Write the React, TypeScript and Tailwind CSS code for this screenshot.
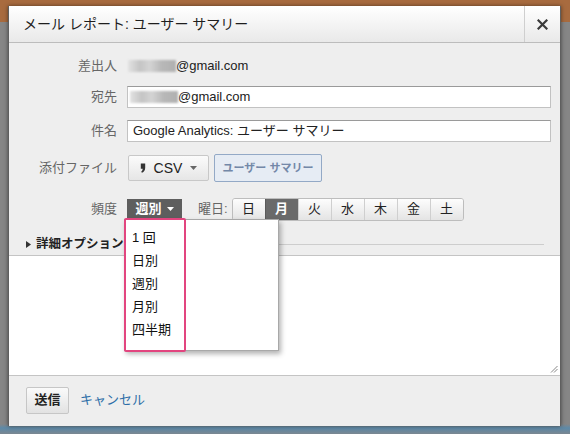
import React from "react";

const font = { fontFamily: '"Liberation Sans", "Noto Sans CJK JP", sans-serif' };

function Caret({ color = "#555" }: { color?: string }) {
  return (
    <svg width="7" height="4" viewBox="0 0 7 4">
      <polygon points="0,0 7,0 3.5,4" fill={color} />
    </svg>
  );
}

function Blur() {
  return (
    <div className="w-[48px] h-[12px] blur-[1.2px] bg-[linear-gradient(to_right,#e2e2e2,#c4c4c4_25%,#d4d4d4_45%,#b8b8b8_70%,#b0b0b0)]" />
  );
}

const days = ["日", "月", "火", "水", "木", "金", "土"];

export default function App() {
  return (
    <div
      className="w-[570px] h-[434px] overflow-hidden pt-[6px] pl-[8px] bg-[linear-gradient(to_bottom,#a86b3f_0px,#a86b3f_22px,#868686_22px,#868686_424px,#5d8aa8_428px,#7b8790_434px)]"
      style={font}
    >
      <div className="relative w-[553px] h-[420px] flex flex-col bg-[#eeeeee] border-l border-r border-[#5f5f5f] shadow-[0_0_4px_rgba(0,0,0,0.5)]">
        {/* header */}
        <div className="h-[37px] flex items-stretch border-b border-[#bcbcbc] bg-[linear-gradient(to_bottom,#ffffff,#e9e9e9)]">
          <div className="flex-1 flex items-center pl-[14px] text-[14px] text-[#1e1e1e]">
            メール レポート: ユーザー サマリー
          </div>
          <div className="w-[36px] border-l border-[#cfcfcf] flex items-center justify-center">
            <svg width="11" height="11" viewBox="0 0 11 11">
              <path d="M1.5 1.5 L9.5 9.5 M9.5 1.5 L1.5 9.5" stroke="#3a3a3a" strokeWidth="2.2" strokeLinecap="square" />
            </svg>
          </div>
        </div>

        {/* body */}
        <div className="flex flex-col pt-[12px] text-[13px]">
          <div className="h-[22px] flex items-center">
            <div className="w-[108px] text-right text-[#666]">差出人</div>
            <div className="ml-[11px] flex items-center text-[#222]">
              <Blur />
              <span>@gmail.com</span>
            </div>
          </div>

          <div className="mt-[9px] h-[22px] flex items-center">
            <div className="w-[108px] text-right text-[#666]">宛先</div>
            <div className="ml-[10px] w-[424px] h-[22px] flex items-center bg-white border border-[#c2c2c2] border-t-[#9a9a9a] pl-[2px] text-[#222]">
              <Blur />
              <span>@gmail.com</span>
            </div>
          </div>

          <div className="mt-[12px] h-[22px] flex items-center">
            <div className="w-[108px] text-right text-[#666]">件名</div>
            <div className="ml-[10px] w-[424px] h-[22px] flex items-center bg-white border border-[#c2c2c2] border-t-[#9a9a9a] pl-[5px] text-[#222]">
              Google Analytics: ユーザー サマリー
            </div>
          </div>

          <div className="mt-[12px] h-[28px] flex items-center">
            <div className="w-[108px] text-right text-[#666]">添付ファイル</div>
            <div className="ml-[11px] w-[81px] h-[26px] flex items-center justify-center gap-[8px] rounded-[2px] border border-[#c8c8c8] bg-[linear-gradient(to_bottom,#fbfbfb,#e6e6e6)] text-[#222] text-[14px]">
              <svg width="6" height="10" viewBox="0 0 6 10">
                <path d="M0.8 0.5h4.4v4.2c0 2.4-1.1 4-3.2 5l-0.9-1c1-0.7 1.5-1.7 1.6-3H0.8z" fill="#333" />
              </svg>
              <span>CSV</span>
              <Caret color="#666" />
            </div>
            <div className="ml-[5px] w-[108px] h-[28px] flex items-center justify-center rounded-[2px] border border-[#93a9c6] bg-[#e6ecf4] text-[#7388a8] text-[11px] font-bold">
              ユーザー サマリー
            </div>
          </div>

          <div className="mt-[16px] h-[22px] flex items-center relative z-10">
            <div className="w-[108px] text-right text-[#666]">頻度</div>
            <div className="ml-[10px] relative">
              <div className="w-[55px] h-[20px] flex items-center justify-center gap-[5px] bg-[#5e5e5e] text-white font-bold text-[13px]">
                <span>週別</span>
                <Caret color="#fff" />
              </div>
              <div className="absolute left-[-3px] top-[20px] w-[155px] h-[132px] bg-white border border-[#a8a8a8] shadow-[2px_3px_5px_rgba(0,0,0,0.3)] pt-[6px] pl-[7px] text-[13px] text-[#111]">
                {["1 回", "日別", "週別", "月別", "四半期"].map((t) => (
                  <div key={t} className="h-[23px] leading-[23px]">
                    {t}
                  </div>
                ))}
              </div>
              <div className="absolute left-[-3px] top-[19px] w-[62px] h-[134px] border-2 border-[#e2457f] rounded-[2px]" />
            </div>
            <div className="ml-[16px] text-[#666]">曜日:</div>
            <div className="ml-[4px] flex h-[23px] rounded-[3px] border border-[#bdbdbd] overflow-hidden">
              {days.map((d, i) => (
                <div
                  key={d}
                  className={
                    i === 1
                      ? "w-[33px] h-full flex items-center justify-center bg-[#6a6a6a] text-white font-bold border-l border-[#5a5a5a]"
                      : i === 0
                      ? "w-[32px] h-full flex items-center justify-center bg-[linear-gradient(to_bottom,#fdfdfd,#e4e4e4)] text-[#222]"
                      : "w-[33px] h-full flex items-center justify-center bg-[linear-gradient(to_bottom,#fdfdfd,#e4e4e4)] text-[#222] border-l border-[#cfcfcf]"
                  }
                >
                  {d}
                </div>
              ))}
            </div>
          </div>

          <div className="mt-[16px] h-[16px] flex items-center pl-[17px]">
            <svg width="5" height="7" viewBox="0 0 5 7">
              <polygon points="0,0 5,3.5 0,7" fill="#333" />
            </svg>
            <span className="ml-[5px] font-bold text-[12.5px] text-[#222]">詳細オプション</span>
            <div className="ml-[5px] mr-[16px] flex-1 h-px bg-[#cdcdcd]" />
          </div>

          <div className="mt-[3px] h-[121px] relative bg-white border-t border-b border-[#c4c4c4]">
            <svg className="absolute right-[2px] bottom-[2px]" width="8" height="8" viewBox="0 0 8 8">
              <path d="M1 7.5 L7.5 1 M4 7.5 L7.5 4" stroke="#888" strokeWidth="1" />
            </svg>
          </div>
        </div>

        {/* footer */}
        <div className="flex-1 flex items-center pl-[17px] pb-[2px]">
          <div className="w-[43px] h-[27px] flex items-center justify-center rounded-[2px] border border-[#c6c6c6] bg-[linear-gradient(to_bottom,#fafafa,#e2e2e2)] text-[13px] font-bold text-[#222]">
            送信
          </div>
          <div className="ml-[11px] text-[13px] text-[#2f6ea8]">キャンセル</div>
        </div>
      </div>
    </div>
  );
}
